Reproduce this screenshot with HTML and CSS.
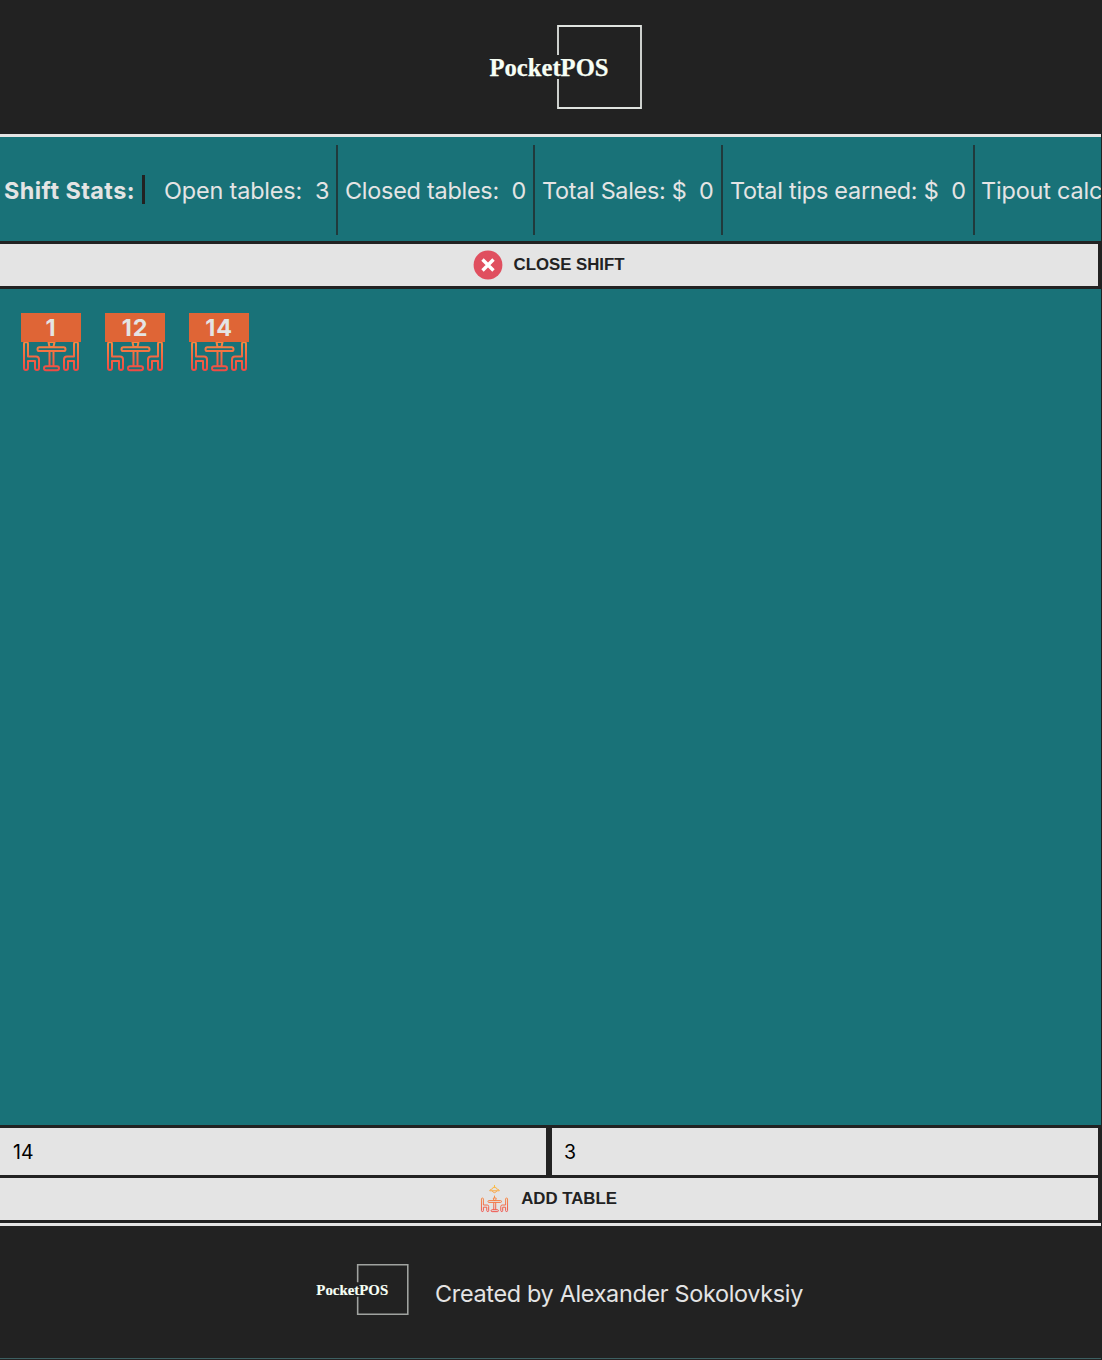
FILE: index.html
```html
<!DOCTYPE html>
<html lang="en">
<head>
<meta charset="utf-8">
<title>PocketPOS</title>
<link rel="stylesheet" href="styles.css">
</head>
<body>
<svg class="defs" aria-hidden="true">
  <defs>
    <linearGradient id="warm" gradientUnits="userSpaceOnUse" x1="0" y1="0" x2="0" y2="60">
      <stop offset="0" stop-color="#fcc63f"/>
      <stop offset="1" stop-color="#f04545"/>
    </linearGradient>
    <symbol id="logo" viewBox="0 0 154 86">
      <path class="logo-box" d="M69 31V2H152V84H69V55"/>
      <text class="logo-text" x="0.5" y="51.5" textLength="119" lengthAdjust="spacingAndGlyphs">PocketPOS</text>
    </symbol>
    <symbol id="dining" viewBox="0 0 60 60">
      <g fill="none" stroke="url(#warm)" stroke-width="2" stroke-linejoin="round">
        <path d="M30 2V7M27 7H33L34 10Q40 11 40 14H20Q20 11 26 10Z"/>
        <path d="M25 14Q30 22 35 14"/>
        <path d="M30 24V29M27.5 29H33.5L32.5 34H28.5Z"/>
        <rect x="16.5" y="34.3" width="28" height="3.8" rx="1.9"/>
        <path d="M28.5 38.2V53.2M32.5 38.2V53.2"/>
        <rect x="23" y="53.2" width="15" height="4" rx="2"/>
        <path d="M3 31Q3 29 5 29T7 31V43.5H15Q18 43.5 18 46.5V55Q18 57 16 57T14 55V48H7V55Q7 57 5 57T3 55Z"/>
        <path d="M57 31Q57 29 55 29T53 31V43.5H46Q43 43.5 43 46.5V55Q43 57 45 57T47 55V48H53V55Q53 57 55 57T57 55Z"/>
      </g>
    </symbol>
  </defs>
</svg>
<div class="app">
  <header class="header"><svg class="logo"><use href="#logo"/></svg></header>
  <section class="stats">
    <div class="stats-title"><strong>Shift Stats:</strong></div>
    <div class="stat open">Open tables:&nbsp; 3</div>
    <div class="stat closed">Closed tables:&nbsp; 0</div>
    <div class="stat sales">Total Sales: $&nbsp; 0</div>
    <div class="stat tips">Total tips earned: $&nbsp; 0</div>
    <div class="stat tipout">Tipout calc</div>
  </section>
  <button class="bar close-shift">
    <svg class="close-icon" viewBox="0 0 30 30"><circle cx="15" cy="15" r="14.4" fill="#e04f5f"/><path d="M9.5 9.5L20.5 20.5M20.5 9.5L9.5 20.5" stroke="#fff" stroke-width="3.4"/></svg>
    <span>CLOSE SHIFT</span>
  </button>
  <main class="tables">
    <div class="table"><svg><use href="#dining"/></svg><span class="number">1</span></div>
    <div class="table"><svg><use href="#dining"/></svg><span class="number">12</span></div>
    <div class="table"><svg><use href="#dining"/></svg><span class="number">14</span></div>
  </main>
  <form class="add-form">
    <div class="fields">
      <input class="field" type="text" value="14" aria-label="Table number">
      <input class="field guests" type="text" value="3" aria-label="Guests">
    </div>
    <button class="bar add-table" type="button">
      <svg class="add-icon"><use href="#dining"/></svg>
      <span>ADD TABLE</span>
    </button>
  </form>
  <footer class="footer">
    <svg class="footer-logo"><use href="#logo"/></svg>
    <span class="credit">Created by Alexander Sokolovksiy</span>
  </footer>
</div>
</body>
</html>
```
FILE: styles.css
```css
* { box-sizing: border-box; }
body {
  margin: 0;
  background: #222;
  color: #e4e4e4;
  font: 23.4px/29px Inter, sans-serif;
  overflow: hidden;
}
.defs { display: block; width: 0; height: 0; }
.app { display: flex; flex-direction: column; width: 1101px; height: 1359px; background: #197278; }
.header { height: 137px; border-bottom: 3px solid #e4e4e4; background: #222; padding: 24px 0 0 489px; }
.logo { display: block; width: 154px; height: 86px; }
.logo-box { fill: none; stroke: var(--box, #dfe3df); stroke-width: var(--box-width, 1.8); }
.logo-text { font: bold 24.5px "Liberation Serif", serif; fill: #f7fff5; stroke: #f7fff5; stroke-width: .25; }
.stats { display: flex; align-items: center; height: 104px; padding: 1px 0 0 4px; overflow: hidden; white-space: nowrap; }
.stats-title { flex: none; width: 141px; height: 29px; border-right: 3px solid #222; line-height: 31px; letter-spacing: .45px; margin-right: 11px; }
.stat { flex: none; height: 90px; line-height: 92px; padding-left: 7px; border-right: 2px solid #203a3c; letter-spacing: -.24px; }
.open { width: 182px; padding-left: 8px; letter-spacing: -.14px; }
.closed { width: 197px; }
.sales { width: 188px; letter-spacing: -.3px; }
.tips { width: 252px; letter-spacing: -.24px; }
.tipout { border: 0; padding-left: 6px; letter-spacing: -.15px; }
.bar {
  display: flex;
  align-items: center;
  justify-content: center;
  width: 100%;
  margin: 0;
  padding: 0 1px 0 0;
  border: 3px solid #222;
  border-left: 0;
  background: #e4e4e4;
  color: #222;
  font: bold 16.8px/20px "Liberation Sans", sans-serif;
}
.bar span { padding-bottom: 1px; }
.close-shift { height: 48px; gap: 11px; }
.close-icon { width: 30px; height: 30px; }
.tables { display: flex; flex: 1; gap: 24px; padding: 24px 21px; }
.table { display: grid; width: 60px; height: 60px; }
.table svg { grid-area: 1 / 1; width: 60px; height: 60px; }
.number { grid-area: 1 / 1; height: 28.5px; z-index: 1; background: #df6536; font-weight: 700; line-height: 30px; text-align: center; letter-spacing: .9px; }
.fields { display: flex; height: 50px; }
.field {
  width: 549px;
  height: 50px;
  margin: 0;
  padding: 0 12px 0 13px;
  border: 3px solid #222;
  border-width: 3px 3px 0 0;
  border-radius: 0;
  background: #e4e4e4;
  color: #000;
  font: 19.5px "Inter", sans-serif;
}
.guests { width: 552px; padding-left: 12px; border-left-width: 3px; }
.add-table { height: 48px; gap: 12px; }
.add-icon { width: 29px; height: 29px; margin-bottom: 1px; }
.footer { display: flex; height: 136px; border-top: 3px solid #e4e4e4; border-bottom: 1px solid #3d5f61; background: #222; padding-left: 316px; }
.footer-logo { --box: #a0a3a0; --box-width: 2.6; width: 93px; height: 53px; margin-top: 37px; }
.credit { margin: 53px 0 0 26px; letter-spacing: -.31px; }
```
